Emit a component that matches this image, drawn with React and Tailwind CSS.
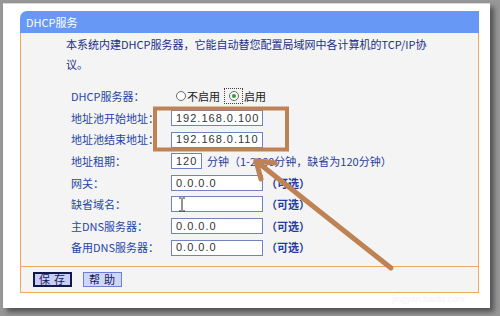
const cjk = { fontFamily: '"Noto Sans CJK SC", "Noto Sans", sans-serif' }

const Field = ({ value, width = "w-[92px]", cursor }) => (
  <div
    className={`relative ${width} h-[16px] border border-[#6f82c6] bg-white flex items-center pl-[4px] text-[11px] text-[#333] tracking-[1px]`}
    style={{ fontFamily: '"Liberation Sans", Arial, sans-serif' }}
  >
    {value}
    {cursor && (
      <svg className="absolute left-[6px] top-[0px]" width="8" height="15" viewBox="0 0 8 15">
        <path d="M1 1h2.5M4.5 1H7M4 1.5v12M1 14h2.5M4.5 14H7" stroke="#222" strokeWidth="1" fill="none" />
      </svg>
    )}
  </div>
)

const Optional = () => <span className="ml-[3px] text-[11px] text-[#1f3c9c] font-bold">（可选）</span>

const Row = ({ label, children }) => (
  <div className="flex items-center h-[21.6px]">
    <div className="w-[100px] text-[11px] text-[#2546a6]">{label}</div>
    {children}
  </div>
)

const Radio = ({ checked }) => (
  <span className="inline-flex items-center justify-center w-[10px] h-[10px] rounded-full border border-[#6a6a6a] bg-white">
    {checked && <span className="w-[4px] h-[4px] rounded-full bg-[#2f9a3a]" />}
  </span>
)

export default function App() {
  return (
    <div className="relative w-[500px] h-[316px] bg-[#979797] overflow-hidden" style={cjk}>
      <div className="ml-[3px] mt-[3px] w-[487px] h-[305px] bg-white border-t border-[#d8d8d8] shadow-[4px_4px_5px_rgba(0,0,0,0.45)] pl-[17px] pt-[7px]">
        <div className="w-[459px]">
          <div className="h-[22px] bg-[#6898f6] rounded-tl-[7px] flex items-center pl-[6px] text-[11px] text-white">
            DHCP服务
          </div>
          <div className="border-x border-b border-[#f3a65c] bg-[#f4f4f4]">
            <div className="border-b border-[#f3a65c] pb-[8px]">
              <p className="pl-[45px] pt-[1px] text-[11px] leading-[20px] text-[#1d2f88]">
                本系统内建DHCP服务器，它能自动替您配置局域网中各计算机的TCP/IP协
                <br />
                议。
              </p>
              <div className="pl-[50px] mt-[11.6px] flex flex-col">
                <Row label="DHCP服务器：">
                  <div className="flex items-center text-[11px] text-[#222] pl-[5px]">
                    <Radio />
                    <span className="ml-[1px]">不启用</span>
                    <span className="ml-[4px] inline-flex items-center justify-center w-[19px] h-[16px] border border-dotted border-[#444]">
                      <Radio checked />
                    </span>
                    <span className="ml-[1px]">启用</span>
                  </div>
                </Row>
                <Row label="地址池开始地址：">
                  <Field value="192.168.0.100" />
                </Row>
                <Row label="地址池结束地址：">
                  <Field value="192.168.0.110" />
                </Row>
                <Row label="地址租期：">
                  <Field value="120" width="w-[31px]" />
                  <span className="ml-[5px] text-[11px] text-[#1f3c9c]">分钟（1-2880分钟，缺省为120分钟）</span>
                </Row>
                <Row label="网关：">
                  <Field value="0.0.0.0" />
                  <Optional />
                </Row>
                <Row label="缺省域名：">
                  <Field value="" cursor />
                  <Optional />
                </Row>
                <Row label="主DNS服务器：">
                  <Field value="0.0.0.0" />
                  <Optional />
                </Row>
                <Row label="备用DNS服务器：">
                  <Field value="0.0.0.0" />
                  <Optional />
                </Row>
              </div>
            </div>
            <div className="h-[25px] flex items-center pl-[12px] gap-[11px]">
              <button className="w-[39px] h-[15px] border-2 border-[#101a4c] bg-[#c9cef4] text-[11px] leading-none text-[#14185a] tracking-[4px] pl-[3px]">
                保存
              </button>
              <button className="w-[39px] h-[15px] border border-[#6b7fd7] bg-[#cfd6fa] text-[11px] leading-none text-[#14185a] tracking-[4px] pl-[3px]">
                帮助
              </button>
            </div>
          </div>
        </div>
      </div>

      <span className="absolute left-[392px] top-[293px] text-[9px] text-[#f3f3f3]" style={{ fontFamily: '"Liberation Sans", sans-serif' }}>
        jingyan.baidu.com
      </span>

      {/* annotation: box + arrow */}
      <svg className="absolute inset-0 pointer-events-none" width="500" height="316" viewBox="0 0 500 316">
        <rect x="155" y="108.5" width="132" height="41" fill="none" stroke="#bf8254" strokeWidth="4" />
        <g stroke="#bf8254" strokeWidth="5" strokeLinecap="round" fill="none">
          <path d="M391 268L256 161" />
          <path d="M275 163L256 161L261 179" strokeLinejoin="round" />
        </g>
      </svg>
    </div>
  )
}
